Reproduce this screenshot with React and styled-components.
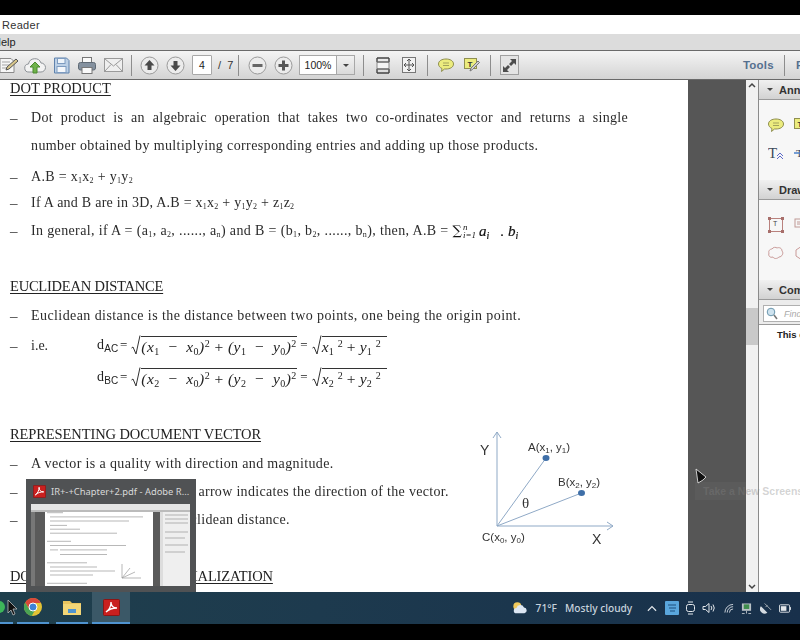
import React from 'react';
import styled, { createGlobalStyle } from 'styled-components';

const Global = createGlobalStyle`
  html, body { margin: 0; padding: 0; background: #000; }
  #root { width: 800px; height: 640px; overflow: hidden; }
`;

const Screen = styled.div`
  position: relative;
  width: 800px;
  height: 640px;
  display: flex;
  flex-direction: column;
  overflow: hidden;
  font-family: "Liberation Sans", Arial, sans-serif;
`;

const TopBlack = styled.div`
  height: 15px;
  background: #000;
`;

const TitleBar = styled.div`
  height: 19px;
  background: #fff;
  color: #333;
  font-size: 11px;
  line-height: 21px;
  padding-left: 2px;
  letter-spacing: 0.3px;
`;

const MenuBar = styled.div`
  height: 16px;
  background: #dcdcdc;
  color: #222;
  font-size: 11px;
  line-height: 17px;
  text-indent: -7px;
  overflow: hidden;
`;

const Toolbar = styled.div`
  height: 28px;
  display: flex;
  align-items: center;
  background: linear-gradient(#f4f4f4, #d4d4d4);
  border-top: 1px solid #6a6a6a;
  border-bottom: 1px solid #6a6a6a;
  overflow: hidden;
`;

const Slot = styled.div`
  width: 26px;
  flex: none;
  display: flex;
  justify-content: center;
  align-items: center;
  margin-left: ${p => p.$l || 0}px;
`;

const Sep = styled.div`
  width: 1px;
  height: 21px;
  flex: none;
  background: #8d8d8d;
  margin-left: ${p => p.$l || 0}px;
  margin-right: ${p => p.$r || 0}px;
`;

const PageInput = styled.div`
  width: 20px;
  height: 20px;
  flex: none;
  margin-left: 4px;
  background: #fff;
  border: 1px solid #a8a8a8;
  box-sizing: border-box;
  border-radius: 1px;
  font-size: 10.5px;
  line-height: 18px;
  text-align: center;
  color: #222;
`;

const PageCount = styled.div`
  width: 20px;
  flex: none;
  margin-left: 6px;
  font-size: 11px;
  color: #333;
  white-space: pre;
`;

const ZoomBox = styled.div`
  width: 56px;
  height: 20px;
  flex: none;
  margin-left: 3px;
  display: flex;
  box-sizing: border-box;
  border: 1px solid #a8a8a8;
  background: #fff;
`;

const ZoomValue = styled.div`
  flex: 1;
  font-size: 10.5px;
  line-height: 18px;
  text-align: center;
  color: #222;
`;

const ZoomArrow = styled.div`
  width: 17px;
  background: linear-gradient(#f2f2f2, #dadada);
  border-left: 1px solid #a8a8a8;
  display: flex;
  align-items: center;
  justify-content: center;
  &::after {
    content: "";
    border-left: 3px solid transparent;
    border-right: 3px solid transparent;
    border-top: 3px solid #444;
  }
`;

const ExpandButton = styled.div`
  width: 19px;
  height: 20px;
  flex: none;
  margin-left: 9px;
  box-sizing: border-box;
  border: 1px solid #a0a0a0;
  background: #e4e4e4;
  display: flex;
  align-items: center;
  justify-content: center;
`;

const ToolLink = styled.div`
  flex: none;
  width: ${p => p.$w || 'auto'};
  margin-left: ${p => p.$l || 0}px;
  color: #55708f;
  font-size: 11.5px;
  font-weight: 700;
  letter-spacing: 0.2px;
`;

const Workspace = styled.div`
  flex: 1;
  min-height: 0;
  display: flex;
`;

const Page = styled.div`
  width: 688px;
  flex: none;
  background: #fff;
  overflow: hidden;
  padding-left: 10px;
  box-sizing: border-box;
  font-family: "Liberation Serif", "Times New Roman", serif;
  font-size: 14px;
  color: #2b2b2b;
  filter: blur(0.25px);
`;

const Heading = styled.div`
  height: 26px;
  line-height: 26px;
  margin-top: ${p => p.$gap || 0}px;
  font-size: 14.5px;
  letter-spacing: ${p => p.$ls || 0}px;
  text-decoration: underline;
  text-underline-offset: 2px;
  color: #222;
  white-space: nowrap;
`;

const Row = styled.div`
  height: 26px;
  line-height: 26px;
  margin-top: ${p => p.$gap || 0}px;
  display: flex;
  white-space: nowrap;
`;

const Dash = styled.span`
  width: 21px;
  flex: none;
  font-size: 15px;
`;

const Text = styled.span`
  letter-spacing: ${p => p.$ls || 0.36}px;
`;

const Cont = styled.div`
  height: 26px;
  line-height: 26px;
  margin-top: ${p => p.$gap || 0}px;
  padding-left: 21px;
  letter-spacing: 0.38px;
  white-space: nowrap;
`;

const Justified = styled.div`
  width: 597px;
  text-align-last: justify;
  white-space: normal;
`;

const Sub = styled.sub`
  font-size: 8px;
  line-height: 0;
  vertical-align: -2px;
`;

const Label = styled.span`
  width: 66px;
  flex: none;
`;

const Formula = styled.div`
  display: flex;
  align-items: center;
  height: 24px;
  font-family: "Liberation Serif", serif;
  font-size: 15.5px;
  color: #222;
`;

const DName = styled.span`
  width: 20px;
  flex: none;
  font-size: 14px;
  letter-spacing: 0.2px;
`;

const Small = styled.sub`
  font-size: 10px;
  line-height: 0;
  vertical-align: -3px;
  font-family: "Liberation Sans", sans-serif;
`;

const RootBar = styled.span`
  display: block;
  width: ${p => p.$w}px;
  height: 19px;
  line-height: 20px;
  border-top: 1px solid #333;
  font-style: italic;
  letter-spacing: ${p => p.$ls}px;
  white-space: pre;
  margin-top: 1px;
`;

const Radical = styled.svg`
  width: 10px;
  height: 21px;
  flex: none;
  margin-left: 1px;
`;

const Eq = styled.span`
  margin: 0 3px;
  font-size: 13px;
`;

const Upright = styled.span`
  font-style: normal;
`;

const Sup = styled.sup`
  font-size: 10px;
  line-height: 0;
  vertical-align: 5px;
  font-style: normal;
`;

const SubI = styled.sub`
  font-size: 10px;
  line-height: 0;
  vertical-align: -3px;
  font-style: ${p => (p.$italic ? 'italic' : 'normal')};
`;

const Sum = styled.span`
  display: inline-flex;
  align-items: center;
  margin-left: 4px;
  font-family: "DejaVu Serif", serif;
  font-size: 13px;
  color: #111;
`;

const Limits = styled.span`
  display: flex;
  flex-direction: column;
  font-family: "Liberation Serif", serif;
  font-size: 9px;
  line-height: 8px;
  font-style: italic;
  width: 16px;
  padding-left: 1px;
`;

const SumTerm = styled.span`
  font-family: "Liberation Serif", serif;
  font-size: 15px;
  font-style: italic;
  -webkit-text-stroke: 0.2px #111;
  white-space: pre;
`;

const VectorBlock = styled.div`
  display: flex;
  justify-content: space-between;
  align-items: flex-start;
  height: 106px;
`;

const VectorRows = styled.div`
  display: flex;
  flex-direction: column;
`;

const Figure = styled.svg`
  width: 150px;
  height: 126px;
  flex: none;
  margin: -24px 58px 0 0;
`;

const Gutter = styled.div`
  width: 58px;
  flex: none;
  background: #565656;
`;

const Scrollbar = styled.div`
  width: 12px;
  flex: none;
  background: #f1f1f1;
  display: flex;
  flex-direction: column;
  align-items: center;
`;

const ScrollTrack = styled.div`
  flex: 1;
  width: 100%;
  padding-top: 217px;
  box-sizing: border-box;
`;

const ScrollThumb = styled.div`
  height: 37px;
  background: #c9c9c9;
`;

const Panel = styled.div`
  width: 42px;
  flex: none;
  background: #f7f7f7;
  border-left: 1px solid #8a8a8a;
  box-sizing: border-box;
  overflow: hidden;
  display: flex;
  flex-direction: column;
`;

const PanelHead = styled.div`
  height: 20px;
  flex: none;
  display: flex;
  align-items: center;
  box-sizing: border-box;
  background: linear-gradient(#f0f0f0, #d2d2d2);
  border-bottom: 1px solid #9a9a9a;
  padding-left: 8px;
  font-size: 11px;
  font-weight: 700;
  color: #333;
  white-space: nowrap;
  gap: 6px;
  &::before {
    content: "";
    border-left: 3px solid transparent;
    border-right: 3px solid transparent;
    border-top: 3px solid #444;
  }
`;

const PanelBody = styled.div`
  height: 80px;
  flex: none;
  display: grid;
  grid-template-columns: 26px 24px;
  grid-auto-rows: 28px;
  padding: ${p => p.$top}px 0 0 9px;
  box-sizing: border-box;
  align-items: center;
`;

const SearchWrap = styled.div`
  height: 25px;
  flex: none;
  padding: 5px 0 0 4px;
  box-sizing: border-box;
  background: #ececec;
  border-bottom: 1px solid #9a9a9a;
`;

const SearchBox = styled.div`
  height: 15px;
  width: 60px;
  background: #fff;
  border: 1px solid #b0b0b0;
  display: flex;
  align-items: center;
  gap: 6px;
  padding-left: 2px;
  font-size: 9px;
  font-style: italic;
  color: #aaa;
`;

const PanelNote = styled.div`
  flex: 1;
  background: #fff;
  padding: 4px 0 0 18px;
  font-size: 9.5px;
  font-weight: 700;
  color: #222;
  white-space: nowrap;
`;

const Taskbar = styled.div`
  height: 32px;
  flex: none;
  display: flex;
  align-items: center;
  background: linear-gradient(90deg, #1f3f4c, #1d3a4e 40%, #18304b);
`;

const BottomBlack = styled.div`
  height: 16px;
  flex: none;
  background: #000;
`;

const TaskItem = styled.div`
  width: ${p => p.$w}px;
  margin-left: ${p => p.$l || 0}px;
  height: 32px;
  flex: none;
  display: flex;
  align-items: center;
  justify-content: center;
  overflow: hidden;
  background: ${p => (p.$active ? '#3b5867' : 'transparent')};
  border-bottom: 2px solid #4f93cf;
  box-sizing: border-box;
`;

const Weather = styled.div`
  margin-left: auto;
  display: flex;
  align-items: center;
  gap: 8px;
  color: #c8d3dd;
  font-family: "Noto Sans", sans-serif;
  font-size: 10.2px;
  font-weight: 500;
  white-space: nowrap;
`;

const Tray = styled.div`
  display: flex;
  align-items: center;
  margin-left: 15px;
  margin-right: 9px;
  gap: 7.4px;
`;

const Popup = styled.div`
  position: absolute;
  left: 26px;
  top: 479px;
  width: 170px;
  height: 113px;
  background: #505254;
  box-sizing: border-box;
  padding: 4px 5px 0;
`;

const PopupTitle = styled.div`
  display: flex;
  align-items: center;
  gap: 5px;
  height: 17px;
  padding-left: 2px;
  color: #d8d8d8;
  font-family: "Noto Sans", sans-serif;
  font-size: 9.4px;
  white-space: nowrap;
`;

const PdfGlyph = styled.svg`
  flex: none;
`;

const Thumb = styled.svg`
  display: block;
  width: 159px;
  height: 82px;
  margin-top: 4px;
`;

const Pointer = styled.svg`
  position: absolute;
  left: ${p => p.$x}px;
  top: ${p => p.$y}px;
  width: 12px;
  height: 17px;
`;

const Ghost = styled.div`
  position: absolute;
  left: 695px;
  top: 482px;
  width: 105px;
  height: 18px;
  box-sizing: border-box;
  padding-left: 8px;
  line-height: 18px;
  overflow: hidden;
  background: rgba(255, 255, 255, 0.03);
  color: rgba(130, 130, 130, 0.35);
  font-size: 10.5px;
  font-weight: 700;
  white-space: nowrap;
`;

const Circle = ({ children }) => (
  <svg width="19" height="19" viewBox="0 0 19 19">
    <circle cx="9.5" cy="9.5" r="8.5" fill="#ececec" stroke="#9a9a9a" />
    {children}
  </svg>
);

const PdfIcon = ({ size = 17 }) => (
  <PdfGlyph width={size} height={size} viewBox="0 0 17 17">
    <rect x="0.5" y="0.5" width="16" height="16" rx="1" fill="#c9201f" stroke="#8c1515" />
    <path d="M3 13c3-2 5-6 5-10 0 4 2 6 6 6-4 0-8 1-11 4z" fill="none" stroke="#fff" strokeWidth="1.3" />
  </PdfGlyph>
);

const Sqrt = ({ w, ls, children }) => (
  <>
    <Radical viewBox="0 0 10 21">
      <path d="M0.5 13l1.500-1 3 7L9 0.5" fill="none" stroke="#333" strokeWidth="1" />
    </Radical>
    <RootBar $w={w} $ls={ls}>{children}</RootBar>
  </>
);

const Distance = ({ name, a }) => (
  <Formula>
    <DName>d<Small>{name}</Small></DName>
    <Eq>=</Eq>
    <Sqrt w={156} ls={0.45}>
      (x<SubI>{a}</SubI>  <Upright>−</Upright>  x<SubI>0</SubI>)<Sup>2</Sup> <Upright>+</Upright> (y<SubI>{a}</SubI>  <Upright>−</Upright>  y<SubI>0</SubI>)<Sup>2</Sup>
    </Sqrt>
    <Eq>=</Eq>
    <Sqrt w={65} ls={0.1}>
      x<SubI>{a}</SubI> <Sup>2</Sup> <Upright>+</Upright> y<SubI>{a}</SubI> <Sup>2</Sup>
    </Sqrt>
  </Formula>
);

const Comment = () => (
  <svg width="16" height="14" viewBox="0 0 16 14">
    <path d="M8 1c4 0 7.500 1.800 7.500 5S12 11 8 11H6.500L3.500 13.500 4 10.500C2 9.700.5 8 .5 6 .5 2.800 4 1 8 1z" fill="#ecec7e" stroke="#8f8f50" />
    <path d="M5 5h6M5 7.500h6" stroke="#a3a35c" />
  </svg>
);

const App = () => (
  <Screen>
    <Global />
    <TopBlack />
    <TitleBar>Reader</TitleBar>
    <MenuBar>Help</MenuBar>
    <Toolbar>
      <Slot $l={-4}>
        <svg width="20" height="17" viewBox="0 0 20 17">
          <path d="M1 1.500h11l3 3v11H1z" fill="#f6f6f6" stroke="#8a8a8a" />
          <path d="M3 5h8M3 8h7M3 11h6" stroke="#a5a5a5" />
          <path d="M7 13l1-3 9-8 2 2-9 8z" fill="#d8c68a" stroke="#555" />
        </svg>
      </Slot>
      <Slot>
        <svg width="22" height="17" viewBox="0 0 22 17">
          <path d="M5 15a4 4 0 0 1-.5-8A6.500 6.500 0 0 1 17 6a4.500 4.500 0 0 1 0 9z" fill="#f3f3f3" stroke="#8d9297" />
          <path d="M11 5l5 5h-3v6H9v-6H6z" fill="#6fb24a" stroke="#4b8a2f" />
        </svg>
      </Slot>
      <Slot>
        <svg width="17" height="17" viewBox="0 0 17 17">
          <path d="M1.500 1h12l2.500 2.500V16h-14.500z" fill="#bcd0e6" stroke="#5f82ad" />
          <rect x="4.500" y="1.500" width="7.500" height="5" fill="#eef4fa" stroke="#7d9bc0" />
          <rect x="4" y="9.500" width="9" height="6" fill="#f4f7fb" stroke="#7d9bc0" />
        </svg>
      </Slot>
      <Slot>
        <svg width="18" height="17" viewBox="0 0 18 17">
          <rect x="4.500" y="0.500" width="9" height="6" fill="#fafafa" stroke="#777" />
          <rect x="0.500" y="5.500" width="17" height="7.500" rx="2" fill="#84919f" stroke="#5f6a75" />
          <rect x="4" y="10.500" width="10" height="6" fill="#fafafa" stroke="#777" />
        </svg>
      </Slot>
      <Slot>
        <svg width="19" height="14" viewBox="0 0 19 14">
          <rect x="0.500" y="0.500" width="18" height="13" fill="#efefef" stroke="#9a9a9a" />
          <path d="M1 1l8.500 7L18 1M1 13l6-6.500M18 13l-6-6.500" fill="none" stroke="#9a9a9a" />
        </svg>
      </Slot>
      <Sep $l={5} $r={4} />
      <Slot>
        <Circle><path d="M9.500 4l5 5.500h-3V14h-4V9.500h-3z" fill="#4a4a4a" /></Circle>
      </Slot>
      <Slot>
        <Circle><path d="M9.500 15l5-5.500h-3V5h-4v4.500h-3z" fill="#4a4a4a" /></Circle>
      </Slot>
      <PageInput>4</PageInput>
      <PageCount>/  7</PageCount>
      <Sep $r={5} />
      <Slot>
        <Circle><rect x="4.500" y="8" width="10" height="3" fill="#666" /></Circle>
      </Slot>
      <Slot>
        <Circle><path d="M8 4.500h3V8h3.500v3H11v3.500H8V11H4.500V8H8z" fill="#555" /></Circle>
      </Slot>
      <ZoomBox>
        <ZoomValue>100%</ZoomValue>
        <ZoomArrow />
      </ZoomBox>
      <Sep $l={8} $r={6} />
      <Slot>
        <svg width="14" height="17" viewBox="0 0 14 17">
          <path d="M1 1h12M1 5V1M13 5V1M1 16h12M1 12v4M13 12v4" fill="none" stroke="#444" strokeWidth="1.400" />
          <rect x="1" y="5" width="12" height="7" fill="#f4f4f4" stroke="#888" />
          <path d="M1 5h12M1 12h12" stroke="#555" />
        </svg>
      </Slot>
      <Slot>
        <svg width="14" height="16" viewBox="0 0 14 16">
          <rect x="0.500" y="0.500" width="13" height="15" fill="#f2f2f2" stroke="#777" />
          <path d="M7 2v12M2 8h10M7 2l-2 2M7 2l2 2M7 14l-2-2M7 14l2-2M2 8l2-2M2 8l2 2M12 8l-2-2M12 8l-2 2" fill="none" stroke="#555" />
        </svg>
      </Slot>
      <Sep $l={5} $r={5} />
      <Slot><Comment /></Slot>
      <Slot>
        <svg width="16" height="15" viewBox="0 0 16 15">
          <rect x="0.500" y="0.500" width="12" height="10" fill="#ecec7e" stroke="#8f8f50" />
          <text x="3.500" y="8.500" fontSize="8" fontWeight="700" fontFamily="Liberation Sans" fill="#333">T</text>
          <path d="M6 13l1-3 7-7 1.500 1.500-7 7z" fill="#cfcfcf" stroke="#777" />
        </svg>
      </Slot>
      <Sep $l={5} />
      <ExpandButton>
        <svg width="15" height="15" viewBox="0 0 15 15">
          <path d="M14 1v6l-2-2-3 3-2-2 3-3-2-2zM1 14V8l2 2 3-3 2 2-3 3 2 2z" fill="#4d4d4d" />
        </svg>
      </ExpandButton>
      <ToolLink $l={224} $w="29px">Tools</ToolLink>
      <Sep $l={12} $r={11} />
      <ToolLink>F</ToolLink>
    </Toolbar>
    <Workspace>
      <Page>
        <Heading $gap={-5}>DOT PRODUCT</Heading>
        <Row $gap={4}>
          <Dash>–</Dash>
          <Justified><Text $ls={0.3}>Dot product is an algebraic operation that takes two co-ordinates vector and returns a single</Text></Justified>
        </Row>
        <Cont $gap={2}>number obtained by multiplying corresponding entries and adding up those products.</Cont>
        <Row $gap={5}>
          <Dash>–</Dash>
          <Text $ls={0.3}>A.B = x<Sub>1</Sub>x<Sub>2</Sub> + y<Sub>1</Sub>y<Sub>2</Sub></Text>
        </Row>
        <Row>
          <Dash>–</Dash>
          <Text $ls={0.25}>If A and B are in 3D, A.B = x<Sub>1</Sub>x<Sub>2</Sub> + y<Sub>1</Sub>y<Sub>2</Sub> + z<Sub>1</Sub>z<Sub>2</Sub></Text>
        </Row>
        <Row $gap={2}>
          <Dash>–</Dash>
          <Text>In general, if A = (a<Sub>1</Sub>, a<Sub>2</Sub>, ......, a<Sub>n</Sub>) and B = (b<Sub>1</Sub>, b<Sub>2</Sub>, ......, b<Sub>n</Sub>), then, A.B =</Text>
          <Sum>
            ∑
            <Limits><span>n</span><span>i=1</span></Limits>
            <SumTerm>a<SubI $italic>i</SubI>   . b<SubI $italic>i</SubI></SumTerm>
          </Sum>
        </Row>
        <Heading $gap={29} $ls={-0.22}>EUCLIDEAN DISTANCE</Heading>
        <Row $gap={4}>
          <Dash>–</Dash>
          <Text $ls={0.42}>Euclidean distance is the distance between two points, one being the origin point.</Text>
        </Row>
        <Row $gap={4}>
          <Dash>–</Dash>
          <Label>i.e.</Label>
          <Distance name="AC" a="1" />
        </Row>
        <Row $gap={6}>
          <Dash />
          <Label />
          <Distance name="BC" a="2" />
        </Row>
        <Heading $gap={30} $ls={-0.1}>REPRESENTING DOCUMENT VECTOR</Heading>
        <VectorBlock>
          <VectorRows>
            <Row $gap={4}>
              <Dash>–</Dash>
              <Text>A vector is a quality with direction and magnitude.</Text>
            </Row>
            <Row $gap={2}>
              <Dash>–</Dash>
              <Text $ls={0.31}>Length is magnitude and an arrow indicates the direction of the vector.</Text>
            </Row>
            <Row $gap={2}>
              <Dash>–</Dash>
              <Text>Its magnitude is via the Euclidean distance.</Text>
            </Row>
          </VectorRows>
          <Figure viewBox="0 0 150 126">
            <g fill="none" stroke="#8fa9c6" strokeWidth="1">
              <path d="M17 103V9M13 15l4-6 4 6M17 103H133M127 99l6 4-6 4" />
              <path d="M17 103L66 35M17 103L101.500 70" />
            </g>
            <ellipse cx="66" cy="35" rx="3.500" ry="3" fill="#3f6fa8" />
            <ellipse cx="101.500" cy="70" rx="3.500" ry="3" fill="#3f6fa8" />
            <g fontFamily="Liberation Sans, sans-serif" fill="#333">
              <text x="0" y="32" fontSize="14">Y</text>
              <text x="48" y="28" fontSize="11.500">A(x<tspan fontSize="8" dy="2">1</tspan><tspan dy="-2">, y</tspan><tspan fontSize="8" dy="2">1</tspan><tspan dy="-2">)</tspan></text>
              <text x="78" y="63" fontSize="11.500">B(x<tspan fontSize="8" dy="2">2</tspan><tspan dy="-2">, y</tspan><tspan fontSize="8" dy="2">2</tspan><tspan dy="-2">)</tspan></text>
              <text x="2" y="118" fontSize="11.500">C(x<tspan fontSize="8" dy="2">0</tspan><tspan dy="-2">, y</tspan><tspan fontSize="8" dy="2">0</tspan><tspan dy="-2">)</tspan></text>
              <text x="112" y="121" fontSize="14">X</text>
              <text x="42" y="85" fontSize="15" fontFamily="Liberation Serif, serif">θ</text>
            </g>
          </Figure>
        </VectorBlock>
        <Heading $gap={10} $ls={-0.13}>DOCUMENT VECTOR NORMALIZATION</Heading>
      </Page>
      <Gutter />
      <Scrollbar>
        <svg width="10" height="11" viewBox="0 0 10 11"><path d="M2 7l3-3 3 3" fill="none" stroke="#444" strokeWidth="1.500" /></svg>
        <ScrollTrack><ScrollThumb /></ScrollTrack>
        <svg width="10" height="11" viewBox="0 0 10 11"><path d="M2 4l3 3 3-3" fill="none" stroke="#444" strokeWidth="1.500" /></svg>
      </Scrollbar>
      <Panel>
        <PanelHead>Annotations</PanelHead>
        <PanelBody $top={11}>
          <Comment />
          <svg width="16" height="14" viewBox="0 0 16 14">
            <rect x="0.500" y="0.500" width="12" height="10" fill="#ecec7e" stroke="#8f8f50" />
            <text x="3.500" y="8.500" fontSize="8" fontWeight="700" fontFamily="Liberation Sans" fill="#333">T</text>
          </svg>
          <svg width="16" height="14" viewBox="0 0 16 14">
            <text x="0" y="12" fontSize="15" fontFamily="Liberation Serif" fill="#3d4a5a">T</text>
            <path d="M9 13l3-3 3 3M9 10l3-3 3 3" fill="none" stroke="#5a68c8" />
          </svg>
          <svg width="16" height="14" viewBox="0 0 16 14">
            <text x="2" y="11" fontSize="11" fontFamily="Liberation Serif" fill="#3d4a5a">T</text>
            <path d="M0 7h14" stroke="#4a80c8" strokeWidth="1.500" />
          </svg>
        </PanelBody>
        <PanelHead>Drawing</PanelHead>
        <PanelBody $top={11}>
          <svg width="16" height="16" viewBox="0 0 16 16">
            <rect x="1.500" y="1.500" width="13" height="13" fill="none" stroke="#b9817d" />
            <path d="M0 0h3v3H0zM13 0h3v3h-3zM0 13h3v3H0zM13 13h3v3h-3z" fill="#a86f6b" />
            <text x="5" y="9" fontSize="7" fontFamily="Liberation Sans" fill="#444">T</text>
          </svg>
          <svg width="16" height="16" viewBox="0 0 16 16">
            <rect x="1" y="2" width="10" height="8" fill="none" stroke="#c09a96" />
            <path d="M3 5h6M3 7h6" stroke="#c09a96" />
          </svg>
          <svg width="16" height="14" viewBox="0 0 16 14">
            <path d="M4 3c1-2 4-2 5-1 2-1 5 0 5 3 2 2 0 6-3 6-2 2-5 2-6 0-3 1-5-1-4-4-1-2 1-4 3-4z" fill="none" stroke="#c99a98" />
          </svg>
          <svg width="16" height="16" viewBox="0 0 16 16">
            <path d="M8 1l6 4v6l-6 4-6-4V5z" fill="none" stroke="#c99a98" />
          </svg>
        </PanelBody>
        <PanelHead>Comments</PanelHead>
        <SearchWrap>
          <SearchBox>
            <svg width="12" height="13" viewBox="0 0 12 13">
              <circle cx="5" cy="5" r="3.800" fill="#cfe3ef" stroke="#6b97ad" />
              <path d="M8 8l3 4" stroke="#777" strokeWidth="1.600" />
            </svg>
            Find
          </SearchBox>
        </SearchWrap>
        <PanelNote>This document</PanelNote>
      </Panel>
    </Workspace>
    <Taskbar>
      <TaskItem $w={13}>
        <svg width="13" height="16" viewBox="0 0 13 16"><circle cx="-1" cy="8" r="6" fill="#3db55a" /></svg>
      </TaskItem>
      <TaskItem $w={32} $l={4}>
        <svg width="18" height="18" viewBox="0 0 18 18">
          <circle cx="9" cy="9" r="9" fill="#e3c335" />
          <path d="M9 0a9 9 0 0 0-7.800 4.500L5 11l4-6h7.800A9 9 0 0 0 9 0z" fill="#d8483a" />
          <path d="M1.200 4.500A9 9 0 0 0 7.700 17.900L10.500 13 5 11z" fill="#4aa354" />
          <circle cx="9" cy="9" r="4" fill="#3f82d6" stroke="#fff" />
        </svg>
      </TaskItem>
      <TaskItem $w={32} $l={7}>
        <svg width="18" height="15" viewBox="0 0 18 15">
          <path d="M0 1h7l2 2h9v12H0z" fill="#e9c45e" />
          <rect x="0" y="4" width="18" height="11" fill="#f3d677" />
          <rect x="5" y="9" width="8" height="4" fill="#4f93cf" />
        </svg>
      </TaskItem>
      <TaskItem $w={38} $l={4} $active>
        <PdfIcon />
      </TaskItem>
      <Weather>
        <svg width="16" height="14" viewBox="0 0 18 14">
          <circle cx="6" cy="5" r="4.500" fill="#f0c95c" />
          <path d="M5 13a3 3 0 0 1 0-6 4.500 4.500 0 0 1 8.500-.5A3.300 3.300 0 0 1 14 13z" fill="#dce6f2" />
        </svg>
        <span>71°F</span>
        <span>Mostly cloudy</span>
      </Weather>
      <Tray>
        <svg width="10" height="7" viewBox="0 0 11 7"><path d="M1 6l4.500-4.500L10 6" fill="none" stroke="#e4e8ec" strokeWidth="1.300" /></svg>
        <svg width="14" height="14" viewBox="0 0 14 14">
          <rect width="14" height="14" rx="1" fill="#5aa6dc" />
          <path d="M3 4h8M4 7h7M5 10h5" stroke="#1d4f7e" />
        </svg>
        <svg width="9" height="14" viewBox="0 0 9 14" fill="none" stroke="#e4e8ec">
          <rect x="0.500" y="3.500" width="8" height="7" rx="2" />
          <path d="M2 1h5M2 13h5" />
        </svg>
        <svg width="14" height="12" viewBox="0 0 14 12" fill="none" stroke="#e4e8ec">
          <path d="M1 4.500h2.500L7 1.500v9L3.500 7.500H1z" />
          <path d="M9 4a3 3 0 0 1 0 4M11 2.500a6 6 0 0 1 0 7" />
        </svg>
        <svg width="10" height="11" viewBox="0 0 11 11" fill="none" stroke="#d5dbe1">
          <path d="M1 10a9 9 0 0 1 9-9M3.500 10a6.500 6.500 0 0 1 6.500-6.500M6 10a4 4 0 0 1 4-4" />
        </svg>
        <svg width="11" height="13" viewBox="0 0 12 13">
          <rect x="1" y="1" width="10" height="8" fill="#b9c1c6" />
          <rect x="3" y="2" width="6" height="5" fill="#3f8d4d" />
          <path d="M1 12h3M8 12h3M6 9v3" stroke="#b9c1c6" />
        </svg>
        <svg width="12" height="13" viewBox="0 0 13 13" fill="#d5dbe1">
          <path d="M1 4l7 7A5 5 0 0 1 1 4z" />
          <path d="M5 1l7 7M6 5l2-2" stroke="#aab2b8" />
        </svg>
        <svg width="12" height="9" viewBox="0 0 13 9">
          <rect x="0.500" y="0.500" width="11" height="8" rx="1" fill="none" stroke="#e4e8ec" />
          <rect x="2" y="2" width="6" height="5" fill="#e4e8ec" />
          <rect x="12" y="3" width="1" height="3" fill="#e4e8ec" />
        </svg>
      </Tray>
    </Taskbar>
    <BottomBlack />
    <Popup>
      <PopupTitle>
        <PdfIcon size={13} />
        IR+-+Chapter+2.pdf - Adobe R...
      </PopupTitle>
      <Thumb viewBox="0 0 159 82">
        <rect width="159" height="82" fill="#5a5a5a" />
        <rect width="159" height="6" fill="#e4e4e4" />
        <rect y="6" width="159" height="2" fill="#bbb" />
        <rect x="0" y="8" width="4" height="74" fill="#777" />
        <rect x="14" y="8" width="108" height="74" fill="#fff" />
        <rect x="129" y="8" width="3" height="74" fill="#ddd" />
        <rect x="132" y="8" width="27" height="74" fill="#efefef" />
        <g stroke="#999" strokeWidth="0.700" fill="none">
          <path d="M16 8.700h16M19 12.900h93M19 17h79M19 21.400h17M19 25.200h30M19 29.200h67" />
          <path d="M16 37.300h24M19 41.500h76M19 45.900h8M29 45.900h47M29 50.500h47" />
          <path d="M16 58.800h40M19 63h47M19 67h65M19 71h43M16 79.300h40" />
          <path d="M91 60v14h19M91 74l8-10M91 74l13-6" />
          <path d="M134 11h23M134 15h23M134 19h23M134 28h23M134 34h20M134 41h23M134 48h20" />
        </g>
      </Thumb>
    </Popup>
    <Ghost>Take a New Screenshot</Ghost>
    <Pointer $x={695} $y={468} viewBox="0 0 12 17">
      <path d="M1 1L11 9 8 12 3 15z" fill="#111" stroke="#ddd" strokeWidth="0.900" />
    </Pointer>
    <Pointer $x={7} $y={599} viewBox="0 0 12 17">
      <path d="M1 1v13l3-3 2 5 2-1-2-5h4z" fill="#111" stroke="#bbb" strokeWidth="0.800" />
    </Pointer>
  </Screen>
);

export default App;
